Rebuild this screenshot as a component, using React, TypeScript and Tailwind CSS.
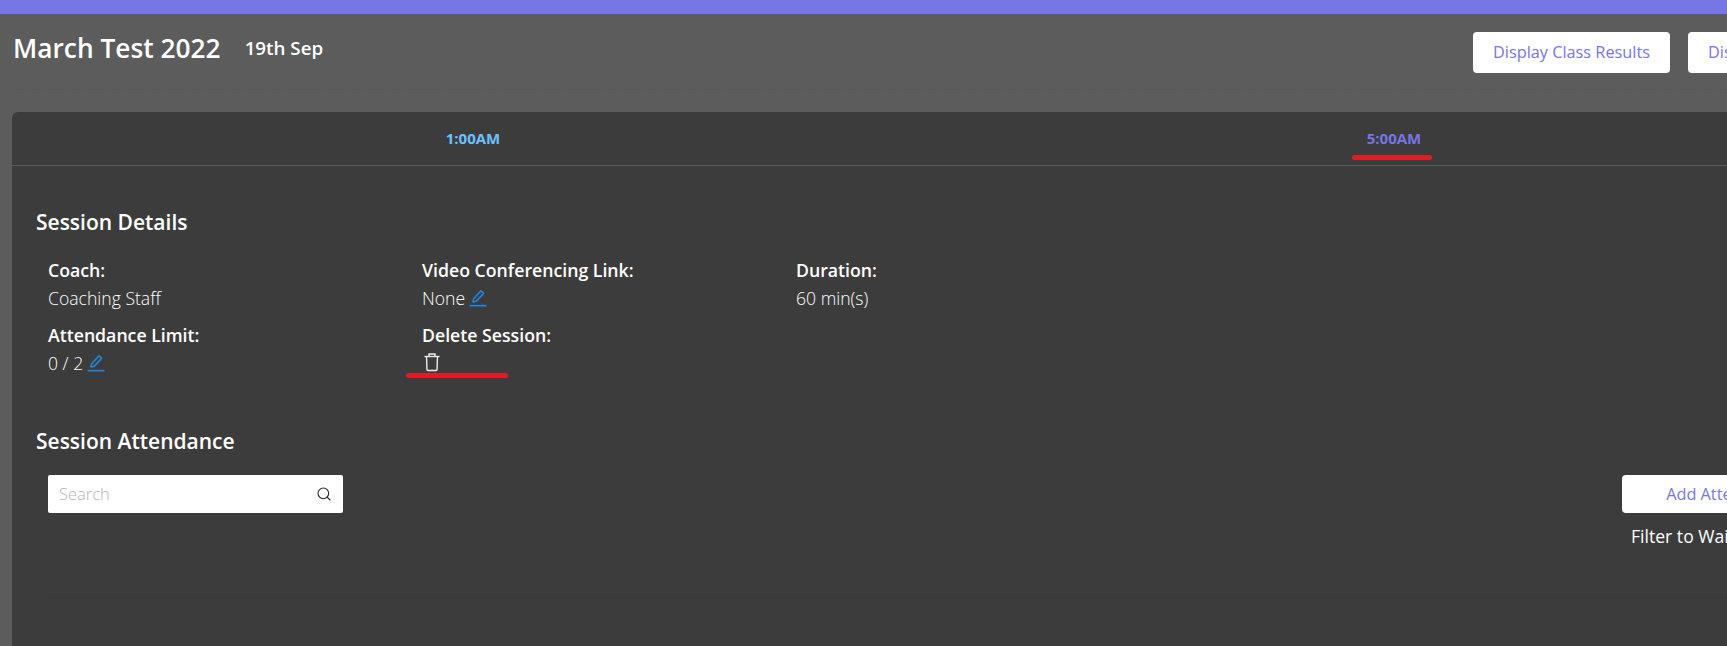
import type { ReactNode } from "react";
import { Search } from "lucide-react";

const font = "font-['Open_Sans','Noto_Sans',sans-serif]";

function PencilMark() {
    return (
        <svg width="18" height="18" viewBox="0 0 16 16" className="text-[#1e88e5]" fill="none" stroke="currentColor">
            <path d="M3.5 11.5 L4.2 8.6 L10.6 1.6 L13 3.8 L6.6 10.8 Z" strokeWidth="1.4" strokeLinejoin="round" />
            <path d="M0.5 14.8 H15.5" strokeWidth="1.4" />
        </svg>
    );
}

function TrashMark() {
    return (
        <svg width="18" height="20" viewBox="0 0 18 20" fill="none" stroke="#eeeeee" strokeWidth="1.4">
            <path d="M1.5 4.5 H16.5" />
            <path d="M6 4.5 V2 H12 V4.5" />
            <path d="M3.5 4.5 L4 17.5 Q4 18.5 5 18.5 H13 Q14 18.5 14 17.5 L14.5 4.5" />
        </svg>
    );
}

function Detail({ label, children }: { label: string; children: ReactNode }) {
    return (
        <div>
            <div className="text-[17.7px] leading-[24px] font-semibold text-white">{label}</div>
            <div className="mt-[4px] flex items-center gap-[4px] h-[24px] text-[17.6px] font-light text-white">{children}</div>
        </div>
    );
}

export default function App() {
    return (
        <div className={`${font} h-[646px] w-[1727px] overflow-hidden bg-[#5c5c5c]`}>
            <div className="h-[14px] bg-[#7676e4]"></div>
            <div className="h-[98px] pl-[12px]">
                <div className="flex items-start justify-between h-[76px] border-b border-dashed border-[#585858]">
                    <div className="flex items-center gap-[24px] mt-[16px] pl-[1px]">
                        <h1 className="text-[26.3px] leading-[36px] font-semibold text-white">March Test 2022</h1>
                        <span className="text-[18.8px] leading-[24px] font-semibold text-white">19th Sep</span>
                    </div>
                    <div className="flex gap-[18px] mt-[18px] w-[254px] shrink-0 overflow-hidden">
                        <button className="h-[41px] w-[197px] shrink-0 rounded-[4px] bg-white text-[16.3px] font-medium text-[#7676e4]">Display Class Results</button>
                        <button className="h-[41px] w-[197px] shrink-0 rounded-[4px] bg-white text-[16.3px] text-left pl-[20px] font-medium text-[#7676e4]">Display Results</button>
                    </div>
                </div>
            </div>
            <div className="ml-[12px] w-[1840px] h-[540px] rounded-t-[6px] bg-[#3c3c3c]">
                <div className="grid grid-cols-2 h-[54px] border-b border-[#5a5a5a]">
                    <div className="flex justify-center pl-[2px] pt-[16px] text-[15px] leading-[20px] font-bold text-[#6ec1ff]">1:00AM</div>
                    <div className="relative flex justify-center pl-[4px] pt-[16px] text-[15px] leading-[20px] font-bold text-[#7676e4]">
                        5:00AM
                        <span className="absolute left-[420px] top-[43px] h-[5px] w-[80px] rounded-full bg-[#e31b23]"></span>
                    </div>
                </div>
                <div className="pl-[24px] pt-[41px]">
                    <h2 className="text-[21px] leading-[30px] font-semibold text-white">Session Details</h2>
                    <div className="mt-[21px] pl-[12px] grid grid-cols-[374px_374px_374px] gap-y-[13px]">
                        <Detail label="Coach:">Coaching Staff</Detail>
                        <Detail label="Video Conferencing Link:">None <PencilMark /></Detail>
                        <Detail label="Duration:">60 min(s)</Detail>
                        <Detail label="Attendance Limit:">0 / 2 <PencilMark /></Detail>
                        <div className="relative">
                            <div className="text-[17.7px] leading-[24px] font-semibold text-white">Delete Session:</div>
                            <div className="mt-[5px] h-[23px] pl-[1px]"><TrashMark /></div>
                            <span className="absolute -left-[16px] top-[50px] h-[5px] w-[102px] rounded-full bg-[#e31b23]"></span>
                        </div>
                    </div>
                    <h2 className="mt-[51px] text-[21px] leading-[30px] font-semibold text-white">Session Attendance</h2>
                    <div className="flex items-start justify-between">
                        <div className="ml-[12px] mt-[19px] flex h-[38px] w-[295px] items-center justify-between rounded-[2px] bg-white px-[11px]">
                            <span className="text-[16.5px] font-light text-[#b5b5b5]">Search</span>
                            <Search size={16} strokeWidth={1.6} className="text-[#222222]" />
                        </div>
                        <div className="mt-[19px] w-[207px] mr-[23px] shrink-0">
                            <button className="h-[38px] w-[192px] rounded-[4px] bg-white text-[16.3px] font-medium text-[#7676e4]">Add Attendee</button>
                            <div className="mt-[11px] pl-[9px] text-[17.6px] leading-[24px] text-white">Filter to Waitlist</div>
                        </div>
                    </div>
                    <div className="mt-[49px] ml-[12px] h-px bg-[#383838]"></div>
                </div>
            </div>
        </div>
    );
}
